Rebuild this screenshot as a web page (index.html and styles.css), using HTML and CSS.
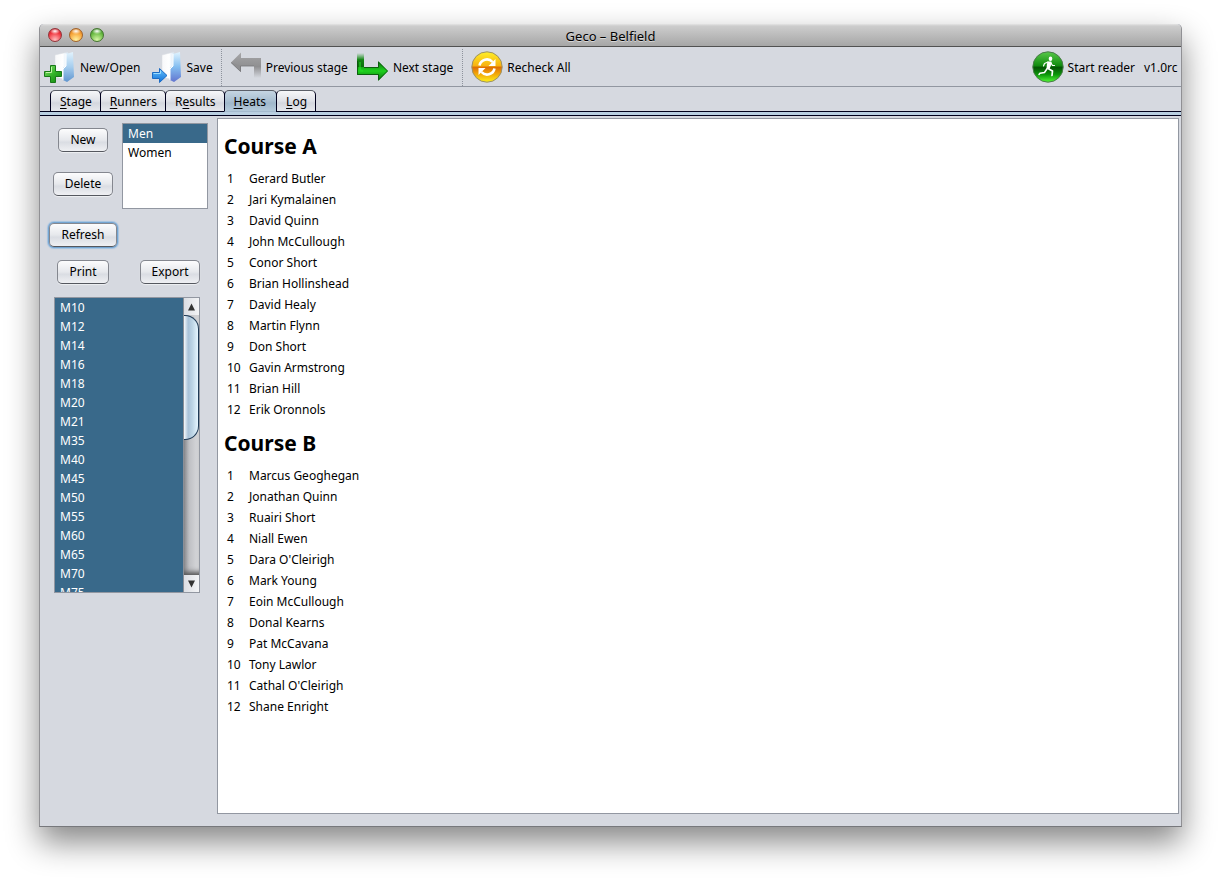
FILE: index.html
```html
<!DOCTYPE html>
<html lang="en">
<head>
<meta charset="utf-8">
<title>Geco – Belfield</title>
<link rel="stylesheet" href="styles.css">
</head>
<body>
<div class="window">
  <header class="titlebar">
    <div class="lights">
      <button class="light red" aria-label="Close"></button>
      <button class="light amber" aria-label="Minimize"></button>
      <button class="light green" aria-label="Zoom"></button>
    </div>
    <h1 class="title">Geco – Belfield</h1>
  </header>

  <div class="toolbar" role="toolbar">
    <button class="tool wide">
      <svg class="icon" viewBox="0 0 32 32" aria-hidden="true">
        <defs>
          <linearGradient id="sheet" x1="0" x2="1"><stop offset="0" stop-color="#f8f8fa"/><stop offset=".6" stop-color="#ffffff"/><stop offset="1" stop-color="#d8e8f6"/></linearGradient>
          <linearGradient id="cover" x1="0" x2="0" y1="0" y2="1"><stop offset="0" stop-color="#e2f3fd"/><stop offset=".5" stop-color="#a6cdee"/><stop offset="1" stop-color="#5f95cf"/></linearGradient>
          <linearGradient id="plus" x1="0" x2="1" y1="0" y2="1"><stop offset="0" stop-color="#8fe070"/><stop offset=".5" stop-color="#35b52b"/><stop offset="1" stop-color="#0b7d0d"/></linearGradient>
        </defs>
        <path d="M11 4 24 1 24 29 11 26z" fill="url(#sheet)" stroke="#d9dce2" stroke-width=".5"/>
        <path d="M22 3 29 1 30 26 23 31 19 29 19 17 22 15z" fill="url(#cover)"/>
        <path d="M22 3 22 15 19 18 19 29" fill="none" stroke="#fff" stroke-width="1"/>
        <path d="M6.500 14.500h5v6h6v5h-6v6h-5v-6h-6v-5h6z" fill="url(#plus)" stroke="#187818"/>
        <path d="M7.500 16v5.500H2" fill="none" stroke="#c3f5a6" stroke-width="1"/>
      </svg>
      <span>New/Open</span>
    </button>
    <button class="tool tight">
      <svg class="icon" viewBox="0 0 32 32" aria-hidden="true">
        <defs>
          <linearGradient id="cover2" x1="0" x2="0" y1="0" y2="1"><stop offset="0" stop-color="#e0f4ff"/><stop offset=".5" stop-color="#83bdf0"/><stop offset="1" stop-color="#6275cf"/></linearGradient>
          <linearGradient id="arrow" x1="0" x2="0" y1="0" y2="1"><stop offset="0" stop-color="#64c0fb"/><stop offset="1" stop-color="#1170d8"/></linearGradient>
        </defs>
        <path d="M10 4 22 1 22 29 10 26z" fill="url(#sheet)" stroke="#d9dce2" stroke-width=".5"/>
        <path d="M21 3 28 1 29 26 22 31 18 29 18 17 21 15z" fill="url(#cover2)"/>
        <path d="M21 3 21 15 18 18 18 29" fill="none" stroke="#fff"/>
        <path d="M.5 21.500h7v-4l7.500 7-7.500 7v-4h-7z" fill="url(#arrow)" stroke="#1c6bc4"/>
        <path d="M1.500 22.500h7v-3" fill="none" stroke="#9bdcff"/>
      </svg>
      <span>Save</span>
    </button>
    <span class="divider"></span>
    <button class="tool">
      <svg class="icon" viewBox="0 0 32 32" aria-hidden="true">
        <defs>
          <linearGradient id="gray" x1="0" x2="0" y1="0" y2="1"><stop offset="0" stop-color="#a6a6a8"/><stop offset=".55" stop-color="#8f8f91"/><stop offset="1" stop-color="#8f8f91" stop-opacity="0"/></linearGradient>
        </defs>
        <path d="M1 11.500 11 1.500V7H31V27H24V15H11V21z" fill="url(#gray)"/>
        <path d="M11 15v6L1 11.500z" fill="#8f8f91"/>
        <path d="M1 11.500 10.500 20.500V15H24" fill="none" stroke="#77777a" stroke-width=".8"/>
      </svg>
      <span>Previous stage</span>
    </button>
    <button class="tool">
      <svg class="icon" viewBox="0 0 32 32" aria-hidden="true">
        <defs>
          <linearGradient id="stem" x1="0" x2="0" y1="0" y2="1"><stop offset="0" stop-color="#1f9b1f" stop-opacity="0"/><stop offset=".45" stop-color="#138413"/><stop offset="1" stop-color="#0a6a0a"/></linearGradient>
          <linearGradient id="next" x1="0" x2="0" y1="0" y2="1"><stop offset="0" stop-color="#0c700c"/><stop offset=".5" stop-color="#1ed01e"/><stop offset="1" stop-color="#0a6f0a"/></linearGradient>
        </defs>
        <path d="M0 2h7v15H0z" fill="url(#stem)"/>
        <path d="M0 16H21V10L31 20 21 30V24H0z" fill="url(#next)"/>
        <path d="M7 16.500H21.500V11L30.500 20 21.500 29V23.500H.5V10" fill="none" stroke="#0a560d" stroke-width=".9"/>
        <path d="M3 11v7q0 2 3 2" fill="none" stroke="#25e425" stroke-width="2" opacity=".5"/>
      </svg>
      <span>Next stage</span>
    </button>
    <span class="divider"></span>
    <button class="tool">
      <svg class="icon" viewBox="0 0 32 32" aria-hidden="true">
        <defs>
          <linearGradient id="gold" x1="0" x2="0" y1="0" y2="1"><stop offset="0" stop-color="#fff028"/><stop offset=".47" stop-color="#f8b010"/><stop offset=".5" stop-color="#dd6c04"/><stop offset=".7" stop-color="#f0a008"/><stop offset="1" stop-color="#fff21a"/></linearGradient>
        </defs>
        <circle cx="16" cy="16" r="15.200" fill="url(#gold)" stroke="#99906a" stroke-width="1"/>
        <path d="M8.500 14.500a7.500 7.500 0 0 1 13-3.500M23.500 17.500a7.500 7.500 0 0 1-13 3.500" fill="none" stroke="#fff" stroke-width="2.600"/>
        <path d="M24.500 8v7h-7zM7.500 24v-7h7z" fill="#fff"/>
      </svg>
      <span>Recheck All</span>
    </button>
    <div class="right">
      <button class="tool">
        <svg class="icon" viewBox="0 0 32 32" aria-hidden="true">
          <defs>
            <linearGradient id="leaf" x1="0" x2="0" y1="0" y2="1"><stop offset="0" stop-color="#58c94a"/><stop offset=".45" stop-color="#138c10"/><stop offset=".52" stop-color="#045404"/><stop offset=".75" stop-color="#0c980a"/><stop offset="1" stop-color="#54fb38"/></linearGradient>
          </defs>
          <circle cx="16" cy="16" r="15.200" fill="url(#leaf)" stroke="#4c7a4c" stroke-width="1"/>
          <ellipse cx="18.500" cy="7.800" rx="1.800" ry="2.200" fill="#fff"/>
          <path d="M15.500 10.500 19.200 10.500 19.800 12.500 17.500 18 14.500 17.500 15 13z" fill="#fff"/>
          <g fill="none" stroke="#fff" stroke-linecap="round" stroke-linejoin="round">
            <path d="M16 11 12.500 12.500 11.500 15M19 12 20.500 14.500 22.500 14.500" stroke-width="1.200"/>
            <path d="M16 17.500 20.500 20 20 24.500" stroke-width="1.700"/>
            <path d="M15.200 17.500 12.500 21.500 8 22.300 7 23.500" stroke-width="1.500"/>
          </g>
        </svg>
        <span>Start reader</span>
      </button>
      <span class="version">v1.0rc</span>
    </div>
  </div>

  <div class="tabs" role="tablist">
    <button class="tab" role="tab"><u>S</u>tage</button>
    <button class="tab" role="tab"><u>R</u>unners</button>
    <button class="tab" role="tab">R<u>e</u>sults</button>
    <button class="tab active" role="tab" aria-selected="true"><u>H</u>eats</button>
    <button class="tab" role="tab"><u>L</u>og</button>
  </div>

  <div class="content">
    <aside class="side">
      <div class="heatsets">
        <div class="stack">
          <button class="btn">New</button>
          <button class="btn">Delete</button>
        </div>
        <select class="list sets" size="4" aria-label="Heat sets">
          <option selected>Men</option>
          <option>Women</option>
        </select>
      </div>
      <div class="row"><div class="cell"><button class="btn focused">Refresh</button></div></div>
      <div class="row"><div class="cell"><button class="btn">Print</button></div><div class="cell"><button class="btn">Export</button></div></div>
      <div class="categories">
        <select class="list cats" multiple size="15" aria-label="Categories">
          <option selected>M10</option><option selected>M12</option><option selected>M14</option><option selected>M16</option>
          <option selected>M18</option><option selected>M20</option><option selected>M21</option><option selected>M35</option>
          <option selected>M40</option><option selected>M45</option><option selected>M50</option><option selected>M55</option>
          <option selected>M60</option><option selected>M65</option><option selected>M70</option><option selected>M75</option>
        </select>
        <div class="scroll">
          <button class="step" aria-label="Scroll up"><svg viewBox="0 0 8 8" aria-hidden="true"><path d="M4 0 8 8H0z"/></svg></button>
          <div class="track"><div class="thumb"></div></div>
          <button class="step" aria-label="Scroll down"><svg viewBox="0 0 8 8" aria-hidden="true"><path d="M0 0H8L4 8z"/></svg></button>
        </div>
      </div>
    </aside>

    <main class="results">
      <section class="course">
        <h2>Course A</h2>
        <table>
          <tr><td>1</td><td>Gerard Butler</td></tr>
          <tr><td>2</td><td>Jari Kymalainen</td></tr>
          <tr><td>3</td><td>David Quinn</td></tr>
          <tr><td>4</td><td>John McCullough</td></tr>
          <tr><td>5</td><td>Conor Short</td></tr>
          <tr><td>6</td><td>Brian Hollinshead</td></tr>
          <tr><td>7</td><td>David Healy</td></tr>
          <tr><td>8</td><td>Martin Flynn</td></tr>
          <tr><td>9</td><td>Don Short</td></tr>
          <tr><td>10</td><td>Gavin Armstrong</td></tr>
          <tr><td>11</td><td>Brian Hill</td></tr>
          <tr><td>12</td><td>Erik Oronnols</td></tr>
        </table>
      </section>
      <section class="course">
        <h2>Course B</h2>
        <table>
          <tr><td>1</td><td>Marcus Geoghegan</td></tr>
          <tr><td>2</td><td>Jonathan Quinn</td></tr>
          <tr><td>3</td><td>Ruairi Short</td></tr>
          <tr><td>4</td><td>Niall Ewen</td></tr>
          <tr><td>5</td><td>Dara O'Cleirigh</td></tr>
          <tr><td>6</td><td>Mark Young</td></tr>
          <tr><td>7</td><td>Eoin McCullough</td></tr>
          <tr><td>8</td><td>Donal Kearns</td></tr>
          <tr><td>9</td><td>Pat McCavana</td></tr>
          <tr><td>10</td><td>Tony Lawlor</td></tr>
          <tr><td>11</td><td>Cathal O'Cleirigh</td></tr>
          <tr><td>12</td><td>Shane Enright</td></tr>
        </table>
      </section>
    </main>
  </div>
</div>
</body>
</html>
```
FILE: styles.css
```css
* { box-sizing: border-box; }

body {
  margin: 0;
  min-height: 100vh;
  padding: 24px 39px 54px;
  display: flex;
  background: #fff;
  color: #000;
  font: 12px/16px "Noto Sans", "Open Sans", sans-serif;
}

button, select { font: inherit; color: inherit; margin: 0; }

.window {
  flex: 1;
  min-width: 0;
  display: flex;
  flex-direction: column;
  background: #d6d9e0;
  border: 1px solid #909094;
  border-top: 0;
  border-bottom-color: #77787c;
  border-radius: 5px 5px 0 0;
  box-shadow: 0 15px 32px rgba(0, 0, 0, .48);
}

/* Title bar */
.titlebar {
  height: 23px;
  display: grid;
  grid-template-columns: 1fr auto 1fr;
  align-items: center;
  padding: 0 8px;
  background: linear-gradient(#e4e4e4, #cdcdcd 2px, #a6a6a6);
  border-bottom: 1px solid #515151;
  border-radius: 5px 5px 0 0;
}
.lights { display: flex; gap: 7px; }
.light {
  width: 14px;
  height: 14px;
  padding: 0;
  border: 1px solid;
  border-radius: 50%;
}
.red { border-color: #92343a; background: radial-gradient(ellipse 5px 3px at 50% 18%, #fff, transparent), radial-gradient(circle at 50% 90%, #ffc0c0, #f0363f 60%, #b80f1c); }
.amber { border-color: #a0622a; background: radial-gradient(ellipse 5px 3px at 50% 18%, #fff, transparent), radial-gradient(circle at 50% 90%, #fff2a0, #f7a236 60%, #c5660f); }
.green { border-color: #44752f; background: radial-gradient(ellipse 5px 3px at 50% 18%, #fff, transparent), radial-gradient(circle at 50% 90%, #d8f8a8, #68b941 60%, #2f8022); }
.title { margin: 0; padding-top: 2px; font-size: 13px; font-weight: 400; line-height: 20px; text-shadow: 0 1px 0 rgba(255, 255, 255, .5); }

/* Toolbar */
.toolbar {
  height: 40px;
  display: flex;
  align-items: center;
  padding-left: 4px;
  overflow: hidden;
  white-space: nowrap;
  border-bottom: 1px solid #9297a1;
}
.tool {
  display: flex;
  align-items: center;
  gap: 4px;
  margin-right: 9px;
  padding: 0;
  border: 0;
  background: none;
}
.tool span, .version { padding-top: 2px; }
.wide { margin-right: 12px; }
.tight { gap: 2px; margin-right: 8px; }
.icon { width: 32px; height: 32px; flex: none; }
.divider { align-self: stretch; margin: 2px 8px 0 0; border-left: 1px dotted #8d929c; }
.right { display: flex; align-items: center; margin-left: auto; }
.version { width: 37px; }

/* Tabs */
.tabs {
  display: flex;
  height: 29px;
  padding: 3px 0 0 10px;
  background: linear-gradient(#00001c, #00001c) 0 24px / 100% 1px no-repeat,
    linear-gradient(#b9cfe1, #b9cfe1) 0 25px / 100% 3px no-repeat,
    linear-gradient(#00001c, #00001c) 0 28px / 100% 1px no-repeat;
}
.tab {
  height: 22px;
  margin-right: -1px;
  padding: 2px 8px 0 9px;
  border: 1px solid #00001c;
  border-top-color: #5b5f68;
  border-radius: 5px 5px 0 0;
  background: linear-gradient(#f6f7f9, #dfe1e7 50%, #d4d7de 60%, #e6e8ed);
}
.tab.active { padding-right: 10px; border-bottom-color: #a4bace; background: linear-gradient(#c5d5e2, #a9bfd1 50%, #9fb7ca 60%, #b4cadb); }
.tab u { text-underline-offset: 2px; }

/* Content */
.content { flex: 1; display: flex; padding: 2px 2px 12px 8px; }
.side { width: 169px; flex: none; padding-top: 5px; }
.heatsets { display: flex; gap: 4px; }
.stack { width: 70px; display: flex; flex-direction: column; align-items: center; gap: 20px; padding-top: 5px; }
.row { display: flex; gap: 17px; }
.cell { width: 70px; display: flex; justify-content: center; }
.row + .row { margin-top: 13px; }
.heatsets + .row { margin-top: 14px; }

.btn {
  height: 24px;
  padding: 0 11px;
  border: 1px solid #84878f;
  border-bottom-color: #55585f;
  border-radius: 5px;
  background: linear-gradient(#fcfcfd, #e6e8ec 50%, #dadde3 60%, #eff0f3);
  box-shadow: 0 1px 1px rgba(255, 255, 255, .6);
}
.btn.focused { box-shadow: 0 0 0 1px #73a4d1, 0 0 1px 2px #a3c2e0; }

.list {
  display: block;
  padding: 0;
  overflow: hidden;
  border: 1px solid #9297a1;
  border-radius: 0;
  outline: 0;
  background: #fff;
  scrollbar-width: none;
}
.list option { height: 19px; min-height: 19px; padding: 1px 5px 0; line-height: 18px; }
.list option:checked { color: #fff; background: #39698a linear-gradient(#39698a, #39698a); }
.sets { width: 86px; height: 86px; }

.categories {
  display: flex;
  width: 146px;
  height: 296px;
  margin: 13px 0 0 6px;
  border: 1px solid #9297a1;
}
.cats { flex: 1; height: 294px; border: 0; }
.scroll { width: 16px; display: flex; flex-direction: column; border-left: 1px solid #8a8f98; }
.step {
  height: 17px;
  display: flex;
  align-items: center;
  justify-content: center;
  padding: 0;
  border: 0;
  background: linear-gradient(90deg, #dcdee3, #f3f4f6);
}
.step svg { width: 7px; height: 8px; fill: #333; }
.track { flex: 1; background: linear-gradient(90deg, #8b8c90, #bfc0c4 35%, #d9dadd); box-shadow: inset 0 -6px 5px -3px #555; }
.thumb {
  height: 125px;
  border: 1px solid #1f3b57;
  border-left: 0;
  border-radius: 0 14px 14px 0;
  background: linear-gradient(90deg, #f5f9fc, #a9c2d8 30%, #bdd5e6 60%, #e6f6ff);
}

.results { flex: 1; min-width: 0; padding: 4px 6px; background: #fff; border: 1px solid #9297a1; }
.course { padding-top: 11px; }
.course h2 { margin: 0 0 10px; font-size: 21px; line-height: 24px; }
.course table { border-spacing: 0; }
.course td { height: 21px; padding: 0 3px; line-height: 21px; }
.course td:first-child { width: 22px; }
```
